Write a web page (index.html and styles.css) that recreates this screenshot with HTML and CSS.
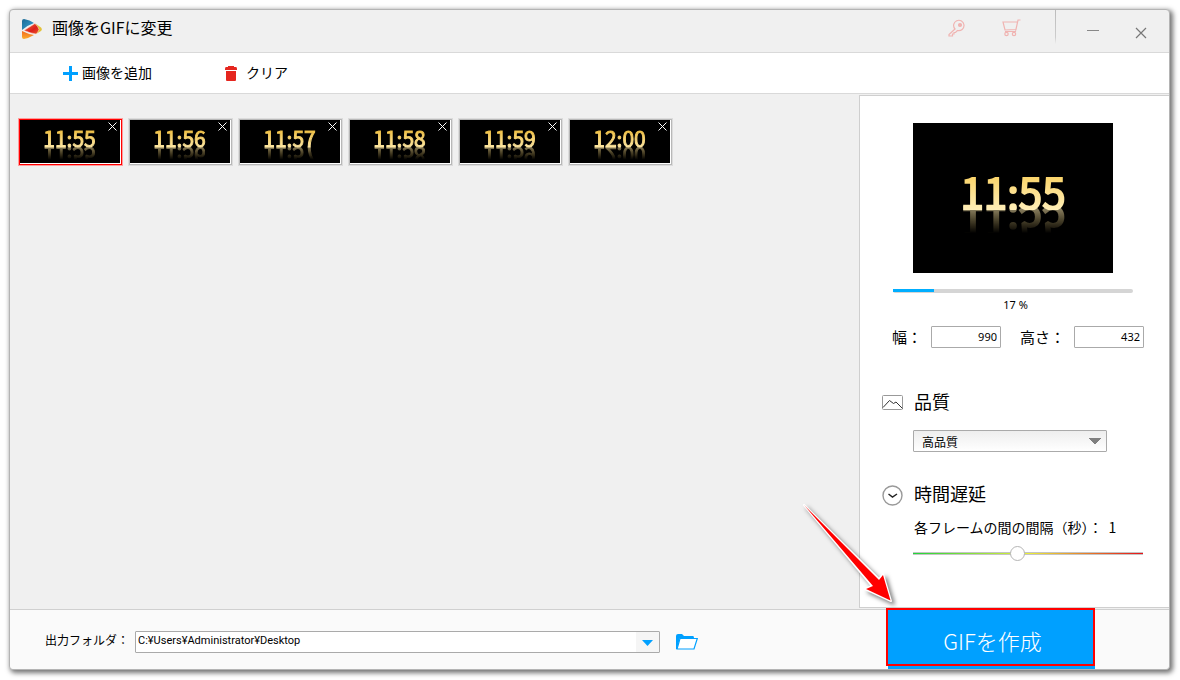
FILE: index.html
```html
<!DOCTYPE html>
<html lang="ja">
<head>
<meta charset="utf-8">
<title>画像をGIFに変更</title>
<link rel="stylesheet" href="styles.css">
</head>
<body>
<div class="window">
  <header class="titlebar">
    <svg class="logo" width="20" height="20" viewBox="0 0 20 20" aria-hidden="true">
      <defs>
        <linearGradient id="lb" x1="0" y1="0" x2="1" y2="1"><stop offset="0" stop-color="#1d6a94"/><stop offset="1" stop-color="#35a5d8"/></linearGradient>
        <linearGradient id="lr" x1="0" y1="0" x2="1" y2="1"><stop offset="0" stop-color="#f2703a"/><stop offset=".6" stop-color="#dc1f1c"/><stop offset="1" stop-color="#f05a28"/></linearGradient>
        <linearGradient id="lo" x1="0" y1="0" x2="0" y2="1"><stop offset="0" stop-color="#f26a21"/><stop offset="1" stop-color="#fbab2c"/></linearGradient>
      </defs>
      <path d="M14 5l5 3.500q1.500 1.500 0 3.500L14 15z" fill="#e3c23a"/>
      <path d="M0 2Q0 0 2 0q6 1 10 4Q6 6 0 11z" fill="url(#lb)"/>
      <path d="M2 11.500L13 4.500q3 3 4 6-1 3-3 4.500-6-1-12-3.500z" fill="url(#lr)" stroke="#f6d9cf" stroke-width=".5"/>
      <path d="M0 12q6 3 12 4-5 3-10 4-2 0-2-2z" fill="url(#lo)"/>
    </svg>
    <h1 class="title">画像をGIFに変更</h1>
    <div class="window-tools">
      <button class="icon-btn" type="button" aria-label="登録">
        <svg width="18" height="18" viewBox="0 0 18 18" fill="none" stroke="#f0b4b2" stroke-width="1.200"><path d="M7 10L1 15.500V17h3.500v-2H6v-1.500h1.500L9.500 11.500A5.200 5.200 0 1 0 7 10z"/><circle cx="12" cy="6" r="1.500" fill="#f0b4b2"/></svg>
      </button>
      <button class="icon-btn cart" type="button" aria-label="購入">
        <svg width="19" height="18" viewBox="0 0 19 18" fill="none" stroke="#f0b4b2" stroke-width="1.200"><path d="M18.500 1H16l-2.500 11.500H3M1 3h14.500l-1.500 7.500-11 .5z"/><circle cx="4.500" cy="15" r="1.700"/><circle cx="12" cy="15" r="1.700"/></svg>
      </button>
      <span class="divider"></span>
      <button class="icon-btn minimize" type="button" aria-label="最小化">
        <svg width="12" height="12" viewBox="0 0 12 12"><path d="M0 6.500h12" stroke="#888"/></svg>
      </button>
      <button class="icon-btn close" type="button" aria-label="閉じる">
        <svg width="12" height="12" viewBox="0 0 12 12"><path d="M1 1l10 10M11 1L1 11" stroke="#777" stroke-width="1.200"/></svg>
      </button>
    </div>
  </header>

  <nav class="toolbar">
    <button class="tool add" type="button">
      <svg width="15" height="15" viewBox="0 0 15 15"><path d="M7.500 0v15M0 7.500h15" stroke="#00a0ff" stroke-width="3"/></svg>
      <span>画像を追加</span>
    </button>
    <button class="tool clear" type="button">
      <svg width="12" height="15" viewBox="0 0 12 15" fill="#e5261f"><path d="M3 0h6v1h2q1 0 1 2v1H0V3q0-2 1-2h2zM1 5h10v9q0 1-1 1H2q-1 0-1-1z"/></svg>
      <span>クリア</span>
    </button>
  </nav>

  <main class="workspace">
    <ul class="frames">
      <li class="frame selected"><span class="clock">11:55</span><button class="remove" type="button" aria-label="11:55を削除"><svg width="9" height="9" viewBox="0 0 9 9"><path d="M.5.5l8 8M8.500.5l-8 8" stroke="#fff"/></svg></button></li>
      <li class="frame"><span class="clock">11:56</span><button class="remove" type="button" aria-label="11:56を削除"><svg width="9" height="9" viewBox="0 0 9 9"><path d="M.5.5l8 8M8.500.5l-8 8" stroke="#fff"/></svg></button></li>
      <li class="frame"><span class="clock">11:57</span><button class="remove" type="button" aria-label="11:57を削除"><svg width="9" height="9" viewBox="0 0 9 9"><path d="M.5.5l8 8M8.500.5l-8 8" stroke="#fff"/></svg></button></li>
      <li class="frame"><span class="clock">11:58</span><button class="remove" type="button" aria-label="11:58を削除"><svg width="9" height="9" viewBox="0 0 9 9"><path d="M.5.5l8 8M8.500.5l-8 8" stroke="#fff"/></svg></button></li>
      <li class="frame"><span class="clock">11:59</span><button class="remove" type="button" aria-label="11:59を削除"><svg width="9" height="9" viewBox="0 0 9 9"><path d="M.5.5l8 8M8.500.5l-8 8" stroke="#fff"/></svg></button></li>
      <li class="frame"><span class="clock">12:00</span><button class="remove" type="button" aria-label="12:00を削除"><svg width="9" height="9" viewBox="0 0 9 9"><path d="M.5.5l8 8M8.500.5l-8 8" stroke="#fff"/></svg></button></li>
    </ul>

    <aside class="panel">
      <div class="preview"><span class="clock large">11:55</span></div>
      <div class="progress"><div class="progress-fill" style="width:17%"></div></div>
      <p class="percent">17 %</p>
      <div class="size-row">
        <label for="w">幅：</label><input class="num" id="w" type="text" value="990">
        <label class="height-label" for="h">高さ：</label><input class="num" id="h" type="text" value="432">
      </div>

      <section class="group quality">
        <svg width="21" height="15" viewBox="0 0 21 15" fill="none"><rect x=".5" y=".5" width="20" height="14" rx="1" stroke="#999"/><path d="M1 12.500L7.500 5.500l4 3L14 7l6.500 6.500" stroke="#333"/></svg>
        <div class="group-body">
          <h2><label for="q">品質</label></h2>
          <select id="q"><option>高品質</option></select>
        </div>
      </section>

      <section class="group delay">
        <svg width="21" height="21" viewBox="0 0 21 21" fill="none"><circle cx="10.500" cy="10.500" r="9.500" stroke="#999" stroke-width="1.400"/><path d="M6.500 9l4 3 4.500-3" stroke="#222" stroke-width="1.500"/></svg>
        <div class="group-body">
          <h2>時間遅延</h2>
          <label class="interval" for="d">各フレームの間の間隔（秒）：<span>1</span></label>
          <input class="slider" id="d" type="range" min="0" max="100" value="45">
        </div>
      </section>
    </aside>
  </main>

  <footer class="footer">
    <label class="out-label" for="out">出力フォルダ：</label>
    <div class="combo">
      <input id="out" type="text" value="C:¥Users¥Administrator¥Desktop">
      <button type="button" aria-label="履歴"><svg width="11" height="6" viewBox="0 0 11 6"><path d="M0 0h11L5.500 6z" fill="#00a0ff"/></svg></button>
    </div>
    <button class="icon-btn folder" type="button" aria-label="フォルダを開く">
      <svg width="22" height="16" viewBox="0 0 22 16"><path d="M0 15V2q0-2 2-2h4l2 2h9q1 0 1 2H4L1 15z" fill="#00a0ff"/><path d="M4 4.500h17.300L18 15H1z" fill="#fff" stroke="#00a0ff" stroke-width="1.200"/></svg>
    </button>
    <div class="create-wrap">
      <button class="create" type="button">GIFを作成</button>
      <span class="highlight"></span>
      <svg class="arrow" width="112" height="116" viewBox="796 498 112 116" aria-hidden="true">
        <path d="M804 505l75 74 4-5 8 27-26-12 7-3z" fill="#fff" stroke="#fff" stroke-width="2" stroke-linejoin="round"/>
        <path d="M804 505l75 75 4-5 7.500 25.500L866 589l7-3z" fill="#f00"/>
      </svg>
    </div>
  </footer>
</div>
</body>
</html>
```
FILE: styles.css
```css
* { box-sizing: border-box; }

body {
  margin: 0;
  min-height: 100vh;
  padding: 9px 10px 10px 9px;
  display: flex;
  background: #fff;
  color: #000;
  font-family: "Noto Sans CJK JP", sans-serif;
  font-size: 14px;
}

h1, h2, p, ul { margin: 0; padding: 0; font-weight: 400; }
button, input, select { font-family: inherit; color: inherit; }
button { border: 0; padding: 0; background: none; }
svg { display: block; flex: none; }

.window {
  flex: 1;
  min-width: 0;
  display: flex;
  flex-direction: column;
  border: 1px solid #b4b4b4;
  border-radius: 4px;
  background: #f0f0f0;
  box-shadow: 2px 2px 5px 1px rgba(0, 0, 0, .55);
}

.titlebar {
  display: flex;
  align-items: flex-start;
  height: 43px;
  padding-left: 12px;
  border-bottom: 1px solid #d9d9d9;
}
.logo { margin-top: 9px; }
.title { margin: 5px 0 0 10px; font-size: 16px; line-height: 24px; }
.window-tools { display: flex; align-items: flex-start; margin-left: auto; padding-right: 22px; }
.icon-btn { margin-top: 9px; }
.cart { margin-left: 36px; }
.divider {
  width: 1px;
  height: 34px;
  margin: 0 31px 0 34px;
  background: linear-gradient(#bbb, #ccc 80%, #f0f0f0);
}
.minimize { margin-top: 14px; }
.close { margin: 17px 0 0 36px; }

.toolbar {
  display: flex;
  align-items: center;
  height: 41px;
  padding-left: 53px;
  border-bottom: 1px solid #d9d9d9;
  background: #fff;
}
.tool { display: flex; align-items: center; font-size: 14px; line-height: 20px; }
.tool span { padding-bottom: 3px; }
.add { gap: 4px; margin-right: 73px; }
.clear { gap: 9px; }

.workspace { flex: 1; display: flex; }
.frames {
  flex: 1;
  display: flex;
  flex-wrap: wrap;
  align-content: flex-start;
  gap: 7px;
  padding: 25px 9px;
  list-style: none;
}
.frame {
  position: relative;
  width: 103px;
  height: 46px;
  padding-top: 7px;
  padding-right: 2px;
  border: 1px solid #b8b8b8;
  background: #000;
  box-shadow: inset -1px -1px #fff, 0 0 0 1px #dcdcdc;
  text-align: center;
}
.selected { border-color: #f00; box-shadow: inset -1px -1px #fff, 0 0 0 1px #ff9c9c; }
.remove { position: absolute; top: 2px; right: 4px; }

.clock {
  display: inline-block;
  height: 21px;
  font-size: 21px;
  line-height: 23px;
  color: transparent;
  background: linear-gradient(#efbd3c 10%, #ffe9a8);
  background-clip: text;
  -webkit-background-clip: text;
  -webkit-text-stroke: 1px transparent;
  -webkit-box-reflect: below -2px linear-gradient(transparent 35%, rgba(0, 0, 0, .6));
}
.large {
  height: 42px;
  font-size: 42px;
  line-height: 46px;
  background-image: linear-gradient(#fad160 10%, #ffeeb8);
  -webkit-text-stroke-width: 2px;
  -webkit-box-reflect: below -4px linear-gradient(transparent 35%, rgba(0, 0, 0, .6));
}

.panel {
  width: 310px;
  margin: 1px 0;
  padding: 27px 24px 40px 22px;
  border: 1px solid #cfcfcf;
  border-right: 0;
  background: #fff;
}
.preview {
  width: 200px;
  height: 150px;
  margin-left: 31px;
  padding-top: 45px;
  background: #000;
  text-align: center;
}
.progress {
  height: 4px;
  margin: 16px 12px 0 11px;
  border-radius: 2px;
  background: #d5d5d5;
}
.progress-fill { height: 3px; background: #00aeff; }
.percent {
  margin-top: 4px;
  padding-left: 4px;
  font: 11px/16px "Noto Sans", sans-serif;
  text-align: center;
}
.size-row { display: flex; align-items: center; margin: 13px 0 0 10px; font-size: 15px; }
.size-row label { width: 39px; line-height: 22px; white-space: nowrap; }
.size-row .height-label { width: 54px; margin-left: 19px; }
.num {
  width: 70px;
  height: 22px;
  padding: 0 3px 2px;
  border: 1px solid #aaa;
  border-radius: 1px;
  font: 11px/16px "Noto Sans", sans-serif;
  text-align: right;
}
.group { display: flex; gap: 11px; }
.group-body { flex: 1; }
.group h2 { font-size: 18px; line-height: 24px; }
.quality { margin-top: 41px; }
.quality > svg { margin-top: 6px; }
.quality select {
  display: block;
  width: 194px;
  height: 22px;
  margin: 17px 0 0 -2px;
  padding: 0 8px;
  appearance: none;
  border: 1px solid #aaa;
  border-radius: 1px;
  background:
    conic-gradient(from -45deg at 50% 100%, #808080 90deg, transparent 0) right 5px center / 12px 6px no-repeat,
    linear-gradient(#eee, #fff);
  font-size: 12px;
}
.delay { margin-top: 29px; }
.delay > svg { margin-top: 4px; }
.interval { display: block; margin-top: 12px; line-height: 20px; white-space: nowrap; }
.interval span { margin-left: 6px; }
.slider {
  display: block;
  width: 230px;
  height: 15px;
  margin: 9px 0 0 -1px;
  appearance: none;
  background: linear-gradient(90deg, #1fd63a, #e9ef3a 50%, #e8121a) center / 100% 1px no-repeat,
    linear-gradient(#c4c4c4, #c4c4c4) center / 100% 3px no-repeat;
}
.slider::-webkit-slider-thumb {
  appearance: none;
  width: 15px;
  height: 15px;
  border: 1px solid #b5b5b5;
  border-radius: 50%;
  background: #fff;
}

.quality, .delay { margin-left: 0; }
.quality select { margin-left: -1px; }

.footer {
  display: flex;
  align-items: center;
  height: 60px;
  padding: 0 74px 0 35px;
  border-top: 1px solid #d0d0d0;
  border-radius: 0 0 4px 4px;
  background: #fafafa;
}
.out-label { width: 90px; font-size: 12px; white-space: nowrap; }
.combo {
  flex: 0 1 525px;
  display: flex;
  height: 22px;
  margin-top: 5px;
  border: 1px solid #aaa;
  border-radius: 1px;
  background: #fff;
}
.combo input {
  flex: 1;
  min-width: 0;
  padding: 0 2px 3px;
  border: 0;
  background: none;
  font: 11px/16px Roboto, "Noto Sans", sans-serif;
}
.combo button { width: 23px; padding: 2px 0 0 6px; background: #f5f5f5; }
.folder { margin: 5px 0 0 16px; }
.create-wrap { position: relative; align-self: stretch; width: 207px; margin-left: auto; }
.create {
  width: 100%;
  height: 100%;
  background: #00a0ff;
  color: #fff;
  font-size: 22px;
  font-weight: 300;
  padding-left: 2px;
}
.highlight { position: absolute; inset: -2px 0 3px -2px; border: 2px solid #f00; pointer-events: none; }
.arrow {
  position: absolute;
  top: -112px;
  left: -92px;
  filter: drop-shadow(3px 3px 2px rgba(0, 0, 0, .5));
  pointer-events: none;
}
```
